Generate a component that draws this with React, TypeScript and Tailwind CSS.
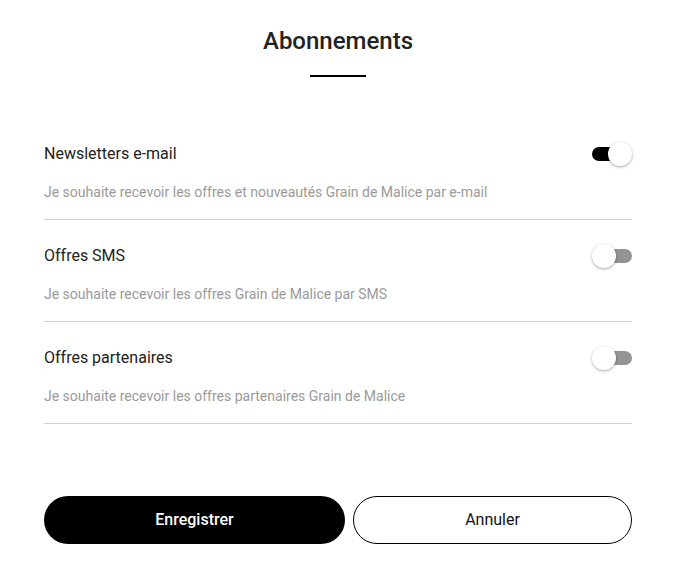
const rows = [
  {
    title: "Newsletters e-mail",
    text: "Je souhaite recevoir les offres et nouveautés Grain de Malice par e-mail",
    on: true,
  },
  {
    title: "Offres SMS",
    text: "Je souhaite recevoir les offres Grain de Malice par SMS",
    on: false,
  },
  {
    title: "Offres partenaires",
    text: "Je souhaite recevoir les offres partenaires Grain de Malice",
    on: false,
  },
];

function Toggle({ on }: { on: boolean }) {
  return (
    <div className="relative w-[40px] h-[24px] shrink-0">
      <div
        className={
          on
            ? "absolute left-0 top-[5px] h-[14px] w-[36px] rounded-full bg-black"
            : "absolute right-0 top-[5px] h-[14px] w-[36px] rounded-full bg-[#939393]"
        }
      />
      <div
        className={
          on
            ? "absolute right-0 top-0 h-[24px] w-[24px] rounded-full bg-white shadow-[0_1px_3px_rgba(0,0,0,0.35)]"
            : "absolute left-0 top-0 h-[24px] w-[24px] rounded-full bg-white shadow-[0_1px_3px_rgba(0,0,0,0.35)]"
        }
      />
    </div>
  );
}

export default function App() {
  return (
    <div className="min-h-[576px] bg-white font-['Roboto',sans-serif]">
      <div className="ml-[44px] w-[588px] pt-[25px]">
        <h1 className="text-center text-[24px] leading-[32px] font-medium text-[#222]">
          Abonnements
        </h1>
        <div className="mx-auto mt-[18px] h-[2px] w-[56px] bg-black" />

        <div className="mt-[65px]">
          {rows.map((r) => (
            <div key={r.title} className="border-b border-[#cfcfcf] pb-[17px] mb-[24px]">
              <div className="flex items-center justify-between">
                <span className="text-[16px] leading-[24px] text-[#222]">{r.title}</span>
                <Toggle on={r.on} />
              </div>
              <p className="mt-[16px] text-[14px] leading-[20px] text-[#9a9a9a]">{r.text}</p>
            </div>
          ))}
        </div>

        <div className="mt-[72px] flex gap-[8px]">
          <button className="h-[48px] w-[301px] rounded-full bg-black text-[16px] font-medium text-white">
            Enregistrer
          </button>
          <button className="h-[48px] flex-1 rounded-full border border-black bg-white text-[16px] text-[#111]">
            Annuler
          </button>
        </div>
      </div>
    </div>
  );
}
